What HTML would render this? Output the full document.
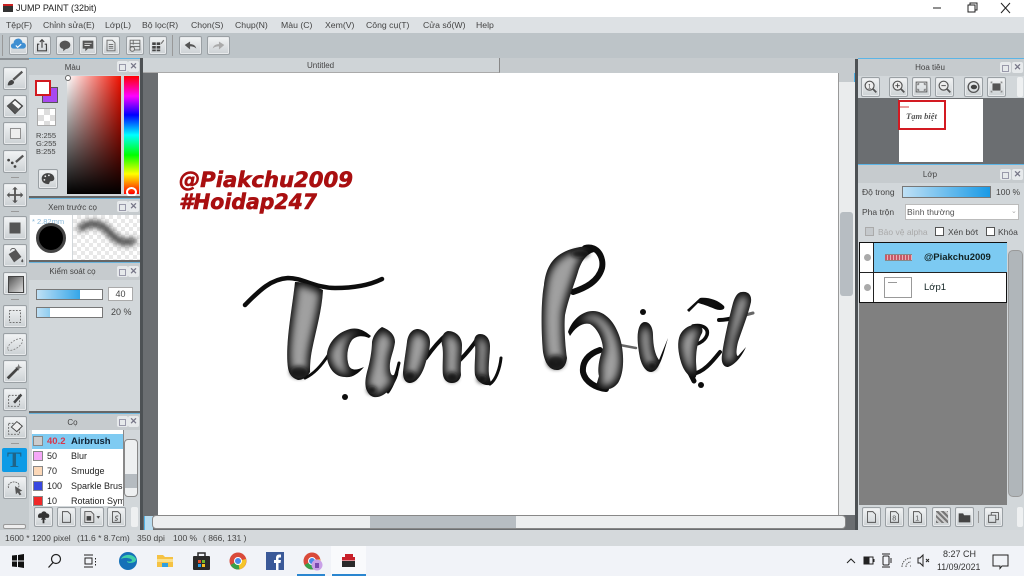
<!DOCTYPE html>
<html><head><meta charset="utf-8">
<style>
html,body{margin:0;padding:0;width:1024px;height:576px;overflow:hidden;background:#d5d9dc}
body{font-family:"Liberation Sans","Noto Sans CJK SC",sans-serif;font-size:9px;color:#333;position:relative}
.a{position:absolute}
.t{position:absolute;white-space:nowrap;line-height:1}
.b{position:absolute;box-sizing:border-box;border:1px solid #9aa0a4;border-radius:2px;background:linear-gradient(#f2f4f5,#ccd1d4);box-shadow:inset 0 0 0 1px #e8eaec}
.b svg{position:absolute;left:0;top:0;width:100%;height:100%}
.h{position:absolute;background:#c6cbce;text-align:center;color:#444;font-size:8px}
.x{position:absolute;width:11px;height:11px;background:#e6e9eb;border-radius:2px;color:#778;font-size:9px;line-height:11px;text-align:center;font-weight:bold}
.p::after{content:"";position:absolute;left:2px;top:3px;width:5px;height:5px;border:1px solid #99a}
.m{position:absolute;top:21px;font-size:8.700px;color:#444;white-space:nowrap;line-height:1}
.s{position:absolute;top:534px;font-size:8.500px;color:#444;white-space:nowrap;line-height:1}
</style></head><body>

<!-- title bar -->
<div class="a" style="left:0;top:0;width:1024px;height:17px;background:#fff"></div>
<div class="a" style="left:3px;top:4px;width:10px;height:8px;background:#333;border-top:2px solid #c22;box-sizing:border-box"></div>
<div class="t" style="left:16px;top:4px;font-size:9px;color:#222">JUMP PAINT (32bit)</div>
<svg class="a" style="left:930px;top:0" width="94" height="17" fill="none" stroke="#222" stroke-width="1"><path d="M3 8h8"/><path d="M38 5h7v7h-7zM40 5V3h7v7h-2"/><path d="M71 3l9 10M80 3l-9 10"/></svg>

<!-- menu -->
<div class="a" style="left:0;top:17px;width:1024px;height:16px;background:#dde1e4"></div>
<div class="m" style="left:6px">Tệp(F)</div>
<div class="m" style="left:43px">Chỉnh sửa(E)</div>
<div class="m" style="left:105px">Lớp(L)</div>
<div class="m" style="left:142px">Bộ lọc(R)</div>
<div class="m" style="left:191px">Chọn(S)</div>
<div class="m" style="left:235px">Chụp(N)</div>
<div class="m" style="left:281px">Màu (C)</div>
<div class="m" style="left:325px">Xem(V)</div>
<div class="m" style="left:366px">Công cụ(T)</div>
<div class="m" style="left:423px">Cửa sổ(W)</div>
<div class="m" style="left:476px">Help</div>

<!-- toolbar -->
<div class="a" style="left:0;top:33px;width:1024px;height:26px;background:#bdc4c8"></div>
<div class="a" style="left:2px;top:35px;width:1px;height:21px;background:#999"></div>
<div class="a" style="left:172px;top:35px;width:1px;height:21px;background:#999"></div>
<div class="b" style="left:9px;top:36px;width:19px;height:19px"><svg viewBox="0 0 19 19"><path d="M4 13a3 3 0 0 1 0-6 5 5 0 0 1 10-0.5 3 3 0 0 1 1 6.500z" fill="#3f8fd2"/><path d="M6.500 9.500l2 2 4-3.500" fill="none" stroke="#fff" stroke-width="1.300"/></svg></div>
<div class="b" style="left:33px;top:36px;width:18px;height:19px"><svg viewBox="0 0 18 19" fill="none" stroke="#444" stroke-width="1.300"><path d="M6 8H4v7.500h10V8h-2M9 12V3M6.500 5.500L9 3l2.500 2.500"/></svg></div>
<div class="b" style="left:56px;top:36px;width:18px;height:19px"><svg viewBox="0 0 18 19"><path d="M3 9c0-3 3-5 6-5s6 2 6 5-3 4.500-5 4.500L7 16v-2.700C5 13 3 12 3 9z" fill="#555"/></svg></div>
<div class="b" style="left:79px;top:36px;width:18px;height:19px"><svg viewBox="0 0 18 19"><path d="M3 4h12v9H9l-3 3v-3H3z" fill="#555"/><path d="M5 7h8M5 9.500h6" stroke="#ddd"/></svg></div>
<div class="b" style="left:102px;top:36px;width:18px;height:19px"><svg viewBox="0 0 18 19" fill="none" stroke="#666"><path d="M4.500 3.500h6l3 3v9h-9zM6.500 8.500h5M6.500 10.500h5M6.500 12.500h5"/></svg></div>
<div class="b" style="left:126px;top:36px;width:18px;height:19px"><svg viewBox="0 0 18 19" fill="none" stroke="#666"><path d="M3.500 3.500h11v11h-11zM3.500 7h11M3.500 10.500h11M7 3.500v5"/><circle cx="6" cy="13.500" r="2.500" fill="#ddd"/></svg></div>
<div class="b" style="left:149px;top:36px;width:18px;height:19px"><svg viewBox="0 0 18 19" fill="#444"><path d="M2.500 6h4v3h-4zM7.500 6h4v3h-4zM2.500 10h4v3h-4zM7.500 10h4v3h-4zM2.500 14h4v2h-4zM7.500 14h4v2h-4z"/><path d="M12 7l3-4 1 1-3 4z" fill="#777"/></svg></div>
<div class="b" style="left:179px;top:36px;width:23px;height:19px"><svg viewBox="0 0 23 19"><path d="M5 9l6-4v3c3 0 6 1 7 5-2-2-4-2.500-7-2.500V14z" fill="#555"/></svg></div>
<div class="b" style="left:207px;top:36px;width:23px;height:19px"><svg viewBox="0 0 23 19"><path d="M18 9l-6-4v3c-3 0-6 1-7 5 2-2 4-2.500 7-2.500V14z" fill="#aaa"/></svg></div>

<!-- canvas area -->
<div class="a" style="left:141px;top:59px;width:716px;height:471px;background:#6b6e71"></div>
<div class="a" style="left:143px;top:58px;width:357px;height:15px;background:#cfd4d7;border-right:1px solid #888;border-bottom:1px solid #aaa;box-sizing:border-box"></div>
<div class="a" style="left:500px;top:58px;width:355px;height:15px;background:#c6cbce"></div>
<div class="t" style="left:307px;top:62px;font-size:8px;color:#444">Untitled</div>
<div class="a" style="left:158px;top:73px;width:680px;height:442px;background:#fff"></div>
<!-- v scrollbar -->
<div class="a" style="left:838px;top:73px;width:17px;height:442px;background:#eaeced;border-left:1px solid #999;box-sizing:border-box"></div>
<div class="a" style="left:839px;top:73px;width:16px;height:9px;background:#c6cbce;border-right:1px solid #4fb3e8;box-sizing:border-box"></div>
<div class="a" style="left:840px;top:212px;width:13px;height:84px;background:#b7bdc2;border-radius:3px"></div>
<!-- h scrollbar -->
<div class="a" style="left:143px;top:515px;width:712px;height:15px;background:#6b6e71"></div>
<div class="a" style="left:144px;top:516px;width:9px;height:14px;background:#b9dcef;border-left:1px solid #4fb3e8;box-sizing:border-box"></div>
<div class="a" style="left:152px;top:515px;width:694px;height:14px;background:#eceeef;border:1px solid #888;border-radius:4px;box-sizing:border-box"></div>
<div class="a" style="left:370px;top:516px;width:146px;height:12px;background:#b7bdc2"></div>

<!-- canvas art -->
<svg class="a" style="left:0;top:0" width="1024" height="576" fill="none" stroke-linecap="round" stroke-linejoin="round">
<defs>
<filter id="inn" x="-20%" y="-20%" width="140%" height="140%" color-interpolation-filters="sRGB">
<feMorphology in="SourceAlpha" operator="erode" radius="3.200"/>
<feGaussianBlur stdDeviation="3.600" result="a"/>
<feFlood flood-color="#a0a0a0"/>
<feComposite in2="a" operator="in"/>
<feComposite in2="SourceAlpha" operator="in" result="g"/>
<feMerge><feMergeNode in="SourceGraphic"/><feMergeNode in="g"/></feMerge>
</filter>
<filter id="dk" x="-50%" y="-50%" width="200%" height="200%"><feGaussianBlur stdDeviation="2"/></filter>
</defs>
<text x="179" y="187" font-family="DejaVu Sans" font-weight="bold" font-style="italic" font-size="21" fill="#a90f10" stroke="#a90f10" stroke-width=".6" textLength="174" lengthAdjust="spacingAndGlyphs">@Piakchu2009</text>
<text x="179" y="209" font-family="DejaVu Sans" font-weight="bold" font-style="italic" font-size="21" fill="#a90f10" stroke="#a90f10" stroke-width=".6" textLength="138" lengthAdjust="spacingAndGlyphs">#Hoidap247</text>
<!-- thin black strokes -->
<g stroke="#0d0d0d">
<path d="M245 305C258 292 270 279 288 278C303 278 315 288 335 288C352 288 368 286 382 279" stroke-width="4.500"/>
<path d="M305 378C314 374 322 365 329 354" stroke-width="3"/>
<path d="M426 358C433 348 440 340 447 334" stroke-width="4"/>
<path d="M460 360C468 352 474 344 478 338" stroke-width="4"/>
<path d="M490 384C496 380 500 368 501 358" stroke-width="3"/>
<path d="M388 392C393 385 397 372 399 363" stroke-width="3"/>
<path d="M585 248C598 245 604 258 602 268C598 282 585 288 573 292" stroke-width="6"/>
<path d="M600 350C588 354 582 362 583 372C585 382 596 388 606 389" stroke-width="6"/>
<path d="M693 326C702 324 709 328 707 335C704 343 695 345 688 347" stroke-width="3.500"/>
<path d="M692 374C703 373 712 362 720 352" stroke-width="4"/>
<path d="M690 373L694 381" stroke-width="5"/>
<path d="M719 320C726 320 730 319 736 317" stroke-width="4"/>
<path d="M620 345L636 348" stroke="#666" stroke-width="2.500"/>
<path d="M738 317L753 313" stroke="#666" stroke-width="3"/>
</g>
<g fill="#0d0d0d" stroke="none"><circle cx="345" cy="397" r="3"/><circle cx="643" cy="312" r="3"/><circle cx="701" cy="385" r="3"/></g>
<!-- thick strokes -->
<g fill="#0c0c0c" filter="url(#inn)">
<path d="M295 282C305 282 315 286 323 290C322 310 316 330 312 350C310 360 310 368 310 372C306 378 302 380 298 380C292 378 289 374 288 368C286 355 288 335 290 320C292 305 294 292 295 282Z"/>
<path d="M347 330C354 327 362 328 371 336L369 338C362 335 356 336 352 340C347 347 346 358 349 366C352 371 357 370 364 367C358 374 352 378 345 377C336 377 329 370 327 358C326 346 335 334 347 330Z"/>
<path d="M382 327C390 330 395 335 395 342C394 350 391 356 390 363C389 372 392 380 396 372L400 362L398 375C395 385 388 392 383 395C378 398 372 398 369 394C364 388 365 380 367 372C370 362 372 350 372 342C373 336 377 330 382 327Z"/>
<path d="M418 329C425 330 430 335 430 342C430 350 427 358 425 365C422 375 416 383 410 383C405 383 403 378 403 372C404 362 406 350 407 342C408 334 412 329 418 329Z"/>
<path d="M448 331C456 331 462 337 462 345C462 355 460 365 461 375C460 381 456 383 452 383C447 383 444 380 443 375C442 365 444 352 442 345C441 338 443 332 448 331Z"/>
<path d="M480 334C487 334 490 340 490 346C490 355 488 365 489 375C490 380 492 384 490 385C484 386 477 382 475 375C474 365 476 352 475 345C473 340 475 334 480 334Z"/>
<path d="M580 247C586 246 592 248 594 252C586 254 581 262 578 272C574 285 568 300 565 315C564 325 565 345 567 358C566 366 562 370 557 370C550 370 545 364 543 352C541 330 541 300 544 285C546 268 552 252 580 247Z"/>
<path d="M568 332C572 320 582 311 593 311C605 311 615 322 620 338C624 352 625 372 618 383C612 391 602 391 596 386L599 376C597 368 600 356 603 348C602 338 597 328 590 324C582 322 575 328 570 336Z"/>
<path d="M645 322C650 322 653 328 653 335C653 345 655 355 659 360L668 338L664 352C661 362 657 372 651 372C646 372 642 366 640 358C638 348 637 338 638 332C639 326 641 322 645 322Z"/>
<path d="M693 325C700 324 704 328 702 333C698 340 696 350 696 360C696 368 698 375 695 378C690 378 684 372 681 362C678 352 677 342 680 335C683 329 688 326 693 325Z"/>
<path d="M687 310L700 298C708 297 718 300 724 306C726 310 720 311 715 309C708 306 702 304 698 303L689 312Z"/>
<path d="M742 292C748 291 752 295 751 302C748 315 742 330 738 342C736 350 736 356 738 356L746 347C742 356 735 365 728 367C723 367 721 362 722 355C724 340 729 318 733 303C735 296 738 292 742 292Z"/>
</g>
<!-- darker stem ends -->
<g fill="#111" stroke="none" filter="url(#dk)" opacity=".85">
<ellipse cx="299" cy="372" rx="9" ry="6"/>
<ellipse cx="410" cy="376" rx="6" ry="5"/>
<ellipse cx="452" cy="377" rx="6" ry="5"/>
<ellipse cx="482" cy="379" rx="5" ry="4"/>
<ellipse cx="556" cy="362" rx="9" ry="7"/>
<ellipse cx="372" cy="390" rx="5" ry="4"/>
<ellipse cx="580" cy="254" rx="9" ry="4"/>
<ellipse cx="652" cy="366" rx="5" ry="4"/>
</g>
</svg>

<!-- LEFT toolbar -->
<div class="a" style="left:0;top:59px;width:29px;height:471px;background:#c5cbce"></div>
<div class="a" style="left:0;top:58px;width:29px;height:2px;background:#8b9094"></div>
<div class="b" style="left:3px;top:67px;width:24px;height:23px"><svg viewBox="0 0 24 23"><path d="M20 4L10 13" stroke="#555" stroke-width="2.500"/><path d="M4 19c0-3 2-6 5-6l2 2c0 3-3 4-7 4z" fill="#444"/></svg></div>
<div class="b" style="left:3px;top:95px;width:24px;height:23px"><svg viewBox="0 0 24 23"><path d="M12 4l8 7-8 8-8-8z" fill="#f5f5f5" stroke="#444" stroke-width="1.500"/><path d="M4 11l4-4 9 8-4 4z" fill="#555"/></svg></div>
<div class="b" style="left:3px;top:122px;width:24px;height:23px"><svg viewBox="0 0 24 23"><rect x="7" y="6" width="11" height="11" fill="#eee" stroke="#888"/></svg></div>
<div class="b" style="left:3px;top:150px;width:24px;height:23px"><svg viewBox="0 0 24 23"><path d="M21 5L13 12" stroke="#555" stroke-width="2.500"/><circle cx="5" cy="10" r="1.500" fill="#444"/><circle cx="9" cy="13" r="1.500" fill="#444"/><circle cx="12" cy="17" r="1.500" fill="#444"/></svg></div>
<div class="a" style="left:11px;top:177px;width:8px;height:1px;background:#999"></div>
<div class="b" style="left:3px;top:183px;width:24px;height:24px"><svg viewBox="0 0 24 24" fill="#555"><path d="M12 3l3 3h-2v5h5V9l3 3-3 3v-2h-5v5h2l-3 3-3-3h2v-5H6v2l-3-3 3-3v2h5V6H9z"/></svg></div>
<div class="a" style="left:11px;top:211px;width:8px;height:1px;background:#999"></div>
<div class="b" style="left:3px;top:216px;width:24px;height:24px"><svg viewBox="0 0 24 24"><rect x="6" y="6" width="12" height="12" fill="#555"/></svg></div>
<div class="b" style="left:3px;top:244px;width:24px;height:23px"><svg viewBox="0 0 24 23"><path d="M5 10l8-5 6 8-8 6z" fill="#555"/><path d="M7 6c1-3 5-3 6 0" fill="none" stroke="#555"/><path d="M20 15c1 2 2 3 0 4-2-1-1-2 0-4z" fill="#555"/></svg></div>
<div class="b" style="left:3px;top:272px;width:24px;height:23px"><div class="a" style="left:4px;top:3px;width:14px;height:15px;background:linear-gradient(135deg,#555,#ddd);border:1px solid #444"></div></div>
<div class="a" style="left:11px;top:299px;width:8px;height:1px;background:#999"></div>
<div class="b" style="left:3px;top:305px;width:24px;height:23px"><svg viewBox="0 0 24 23"><rect x="6" y="5" width="12" height="13" fill="none" stroke="#666" stroke-dasharray="2 1.500"/></svg></div>
<div class="b" style="left:3px;top:333px;width:24px;height:23px"><svg viewBox="0 0 24 23"><path d="M4 16c0-5 9-11 14-11 3 0 3 4 0 7-3 4-14 9-14 4z" fill="none" stroke="#888" stroke-dasharray="2 1.500"/></svg></div>
<div class="b" style="left:3px;top:360px;width:24px;height:23px"><svg viewBox="0 0 24 23"><path d="M4 19L15 8" stroke="#444" stroke-width="3"/><path d="M16 3l1 3 3 1-3 1-1 3-1-3-3-1 3-1z" fill="#777"/></svg></div>
<div class="b" style="left:3px;top:388px;width:24px;height:23px"><svg viewBox="0 0 24 23"><rect x="5" y="7" width="12" height="12" fill="none" stroke="#666" stroke-dasharray="2 1.500"/><path d="M10 14l8-9 2 2-8 9z" fill="#444"/></svg></div>
<div class="b" style="left:3px;top:416px;width:24px;height:23px"><svg viewBox="0 0 24 23"><rect x="5" y="7" width="12" height="12" fill="none" stroke="#666" stroke-dasharray="2 1.500"/><path d="M8 11l6-6 6 5-6 6z" fill="#eee" stroke="#444"/></svg></div>
<div class="a" style="left:11px;top:443px;width:8px;height:1px;background:#999"></div>
<div class="a" style="left:2px;top:448px;width:25px;height:24px;background:#0d9be6;border-radius:2px"></div>
<div class="t" style="left:7px;top:449px;font-size:22px;font-weight:bold;font-family:'Liberation Serif',serif;color:#1f6488">T</div>
<div class="b" style="left:3px;top:476px;width:24px;height:23px"><svg viewBox="0 0 24 23" fill="none"><path d="M5 12c-2-5 5-8 9-6 3 1 3 5 1 6" stroke="#666" stroke-dasharray="2 1"/><path d="M12 10l8 5-3 1 2 3-2 1-2-3-2 2z" fill="#555"/></svg></div>
<div class="a" style="left:3px;top:524px;width:23px;height:5px;background:#eee;border:1px solid #999;border-radius:2px;box-sizing:border-box"></div>

<!-- LEFT panels -->
<div class="a" style="left:29px;top:59px;width:112px;height:471px;background:#d2d7da"></div>
<div class="a" style="left:29px;top:58px;width:112px;height:1px;background:#5cb5e6"></div>
<div class="a" style="left:140px;top:58px;width:3px;height:472px;background:#4d5154"></div>
<div class="h" style="left:29px;top:59px;width:111px;height:16px;line-height:17px;padding-right:24px;box-sizing:border-box">Màu</div>
<div class="x p" style="left:117px;top:61px"></div><div class="x" style="left:128px;top:61px">✕</div>
<div class="a" style="left:42px;top:87px;width:16px;height:16px;background:#a848f0;border:1px solid #555;box-sizing:border-box"></div>
<div class="a" style="left:35px;top:80px;width:16px;height:16px;background:#fff;border:2px solid #d21a20;box-sizing:border-box"></div>
<div class="a" style="left:37px;top:108px;width:19px;height:18px;background:conic-gradient(#ddd 25%,#fff 0 50%,#ddd 0 75%,#fff 0) 0 0/12px 12px;border:1px solid #aaa;box-sizing:border-box"></div>
<div class="t" style="left:36px;top:132px;font-size:7.500px;color:#444">R:255</div>
<div class="t" style="left:36px;top:140px;font-size:7.500px;color:#444">G:255</div>
<div class="t" style="left:36px;top:148px;font-size:7.500px;color:#444">B:255</div>
<div class="b" style="left:38px;top:169px;width:20px;height:20px"><svg viewBox="0 0 20 20"><path d="M10 3.500c4 0 7 2.500 7 6 0 3-3 3-4 3-1.500 0-1 2-2 3-1 .5-8 0-8-6 0-3.500 3-6 7-6z" fill="#444"/><circle cx="7" cy="7" r="1" fill="#eee"/><circle cx="11" cy="6" r="1" fill="#eee"/><circle cx="6" cy="11" r="1" fill="#eee"/></svg></div>
<div class="a" style="left:67px;top:76px;width:54px;height:118px;background:linear-gradient(to top,#000,rgba(0,0,0,0)),linear-gradient(to right,#fff,#f01000)"></div>
<div class="a" style="left:65px;top:75px;width:6px;height:6px;border:1px solid #666;border-radius:50%;background:#fff;box-sizing:border-box"></div>
<div class="a" style="left:124px;top:76px;width:15px;height:118px;background:linear-gradient(#f00,#f0f 17%,#00f 33%,#0ff 50%,#0f0 67%,#ff0 83%,#f00)"></div>
<div class="a" style="left:126px;top:187px;width:11px;height:10px;border:2px solid #fff;border-radius:50%;box-sizing:border-box"></div>
<div class="a" style="left:29px;top:196px;width:111px;height:3px;background:linear-gradient(#666 60%,#6ab4dc 60%)"></div>

<div class="h" style="left:29px;top:199px;width:111px;height:16px;line-height:17px;padding-right:24px;box-sizing:border-box">Xem trước cọ</div>
<div class="x p" style="left:117px;top:201px"></div><div class="x" style="left:128px;top:201px">✕</div>
<div class="a" style="left:30px;top:215px;width:42px;height:45px;background:#fff"></div>
<div class="t" style="left:32px;top:218px;font-size:7.500px;color:#8ab8d8">* 2.82mm</div>
<div class="a" style="left:36px;top:223px;width:30px;height:30px;border-radius:50%;background:#000;border:3px solid #444;box-sizing:border-box"></div>
<div class="a" style="left:73px;top:215px;width:67px;height:45px;background:conic-gradient(#e8e8e8 25%,#fff 0 50%,#e8e8e8 0 75%,#fff 0) 0 0/8px 8px"></div>
<svg class="a" style="left:73px;top:215px" width="67" height="45" fill="none"><defs><filter id="b2" x="-20%" y="-50%" width="140%" height="200%"><feGaussianBlur stdDeviation="3"/></filter></defs><path d="M8 13C18 6 28 8 36 17C42 24 50 30 60 26" stroke="#444" stroke-width="7" stroke-linecap="round" filter="url(#b2)"/></svg>
<div class="a" style="left:29px;top:260px;width:111px;height:3px;background:linear-gradient(#666 60%,#6ab4dc 60%)"></div>

<div class="h" style="left:29px;top:263px;width:111px;height:17px;line-height:18px;padding-right:24px;box-sizing:border-box">Kiểm soát cọ</div>
<div class="x p" style="left:117px;top:266px"></div><div class="x" style="left:128px;top:266px">✕</div>
<div class="a" style="left:36px;top:289px;width:67px;height:11px;border:1px solid #777;box-sizing:border-box;background:linear-gradient(to right,#bfe0f5 0,#35a6e8 66%,#fff 66%)"></div>
<div class="a" style="left:108px;top:287px;width:25px;height:14px;border:1px solid #aaa;background:#fff;box-sizing:border-box;text-align:center;line-height:12px;font-size:9px;color:#444">40</div>
<div class="a" style="left:36px;top:307px;width:67px;height:11px;border:1px solid #777;box-sizing:border-box;background:linear-gradient(to right,#bfe0f5 0,#8fcdf0 20%,#fff 20%)"></div>
<div class="t" style="left:111px;top:308px;font-size:9px;color:#444">20 %</div>
<div class="a" style="left:29px;top:411px;width:111px;height:3px;background:linear-gradient(#666 60%,#6ab4dc 60%)"></div>

<div class="h" style="left:29px;top:414px;width:111px;height:16px;line-height:17px;padding-right:24px;box-sizing:border-box">Cọ</div>
<div class="x p" style="left:117px;top:416px"></div><div class="x" style="left:128px;top:416px">✕</div>
<div class="a" style="left:32px;top:430px;width:92px;height:76px;background:#fff;overflow:hidden;border-right:1px solid #888;box-sizing:border-box">
 <div class="a" style="left:0;top:4px;width:92px;height:15px;background:#7fcbf2"></div>
 <div class="a" style="left:1px;top:6px;width:10px;height:10px;background:#ccc;border:1px solid #888;box-sizing:border-box"></div>
 <div class="t" style="left:15px;top:7px;font-size:9.500px;font-weight:bold;color:#d8394d">40.2</div>
 <div class="t" style="left:39px;top:7px;font-size:9.500px;font-weight:bold;color:#123">Airbrush</div>
 <div class="a" style="left:1px;top:21px;width:10px;height:10px;background:#f5a8f8;border:1px solid #888;box-sizing:border-box"></div>
 <div class="t" style="left:15px;top:22px;font-size:9px;color:#222">50</div><div class="t" style="left:39px;top:22px;font-size:9px;color:#222">Blur</div>
 <div class="a" style="left:1px;top:36px;width:10px;height:10px;background:#fcd8b8;border:1px solid #888;box-sizing:border-box"></div>
 <div class="t" style="left:15px;top:37px;font-size:9px;color:#222">70</div><div class="t" style="left:39px;top:37px;font-size:9px;color:#222">Smudge</div>
 <div class="a" style="left:1px;top:51px;width:10px;height:10px;background:#3848e0;border:1px solid #888;box-sizing:border-box"></div>
 <div class="t" style="left:15px;top:52px;font-size:9px;color:#222">100</div><div class="t" style="left:39px;top:52px;font-size:9px;color:#222">Sparkle Brush</div>
 <div class="a" style="left:1px;top:66px;width:10px;height:10px;background:#f02828;border:1px solid #888;box-sizing:border-box"></div>
 <div class="t" style="left:15px;top:67px;font-size:9px;color:#222">10</div><div class="t" style="left:39px;top:67px;font-size:9px;color:#222">Rotation Sym</div>
</div>
<div class="a" style="left:124px;top:439px;width:14px;height:58px;background:#eef0f1;border:1px solid #888;border-radius:4px;box-sizing:border-box"></div>
<div class="a" style="left:125px;top:474px;width:12px;height:14px;background:#b5bbc0"></div>
<div class="b" style="left:34px;top:507px;width:19px;height:20px"><svg viewBox="0 0 19 20"><path d="M4 11c-2-3 1-6 3-5 1-3 5-3 6 0 3 0 4 3 2 5z" fill="#333"/><path d="M9.500 9l3 4h-2v4h-2v-4h-2z" fill="#333"/></svg></div>
<div class="b" style="left:57px;top:507px;width:19px;height:20px"><svg viewBox="0 0 19 20" fill="none" stroke="#555"><path d="M5 4h6l3 3v9H5z"/></svg></div>
<div class="b" style="left:80px;top:507px;width:24px;height:20px"><svg viewBox="0 0 24 20"><path d="M4 4h7l3 3v9H4z" fill="#ddd" stroke="#555"/><rect x="6" y="9" width="5" height="5" fill="#444"/><path d="M17 9h4l-2 3z" fill="#444"/></svg></div>
<div class="b" style="left:107px;top:507px;width:19px;height:20px"><svg viewBox="0 0 19 20" fill="none" stroke="#555"><path d="M5 4h6l3 3v9H5z"/><path d="M11.500 9c-3-1-4 2-2 2.500s1 3-2 2"/></svg></div>
<div class="a" style="left:131px;top:507px;width:7px;height:20px;background:#eef0f1;border-radius:2px"></div>

<!-- RIGHT panels -->
<div class="a" style="left:855px;top:59px;width:3px;height:471px;background:#4d5154"></div>
<div class="a" style="left:858px;top:59px;width:166px;height:471px;background:#d2d7da"></div>
<div class="a" style="left:858px;top:58px;width:166px;height:1px;background:#5cb5e6"></div>
<div class="h" style="left:858px;top:59px;width:166px;height:17px;line-height:18px;padding-right:22px;box-sizing:border-box">Hoa tiêu</div>
<div class="x p" style="left:1000px;top:62px"></div><div class="x" style="left:1012px;top:62px">✕</div>
<svg width="0" height="0" style="position:absolute"><defs><symbol id="mg" viewBox="0 0 19 20"><circle cx="8.500" cy="8.500" r="5" fill="#eee" stroke="#555" stroke-width="1.300"/><path d="M12 12l4 4" stroke="#555" stroke-width="2"/></symbol></defs></svg>
<div class="b" style="left:861px;top:77px;width:19px;height:20px"><svg viewBox="0 0 19 20"><use href="#mg"/><text x="6.500" y="11.500" font-size="7" fill="#444" font-family="Liberation Sans">1</text></svg></div>
<div class="b" style="left:889px;top:77px;width:19px;height:20px"><svg viewBox="0 0 19 20"><use href="#mg"/><path d="M6 8.500h5M8.500 6v5" stroke="#444"/></svg></div>
<div class="b" style="left:912px;top:77px;width:19px;height:20px"><svg viewBox="0 0 19 20" fill="none" stroke="#555"><rect x="3.500" y="4.500" width="12" height="11"/><path d="M5.500 8V6.500H7M12 6.500h1.500V8M13.500 12v1.500H12M7 13.500H5.500V12"/></svg></div>
<div class="b" style="left:935px;top:77px;width:19px;height:20px"><svg viewBox="0 0 19 20"><use href="#mg"/><path d="M6 8.500h5" stroke="#444"/></svg></div>
<div class="b" style="left:964px;top:77px;width:19px;height:20px"><svg viewBox="0 0 19 20"><circle cx="9.500" cy="10" r="6" fill="none" stroke="#555" stroke-width="1.500"/><ellipse cx="10" cy="10" rx="3.500" ry="2.500" fill="#444"/></svg></div>
<div class="b" style="left:987px;top:77px;width:19px;height:20px"><svg viewBox="0 0 19 20"><rect x="5" y="6" width="9" height="8" fill="#555"/><path d="M3.500 6V4.500H5M14 4.500h1.500V6M15.500 14v1.500H14M5 15.500H3.500V14" fill="none" stroke="#777"/></svg></div>
<div class="a" style="left:1017px;top:77px;width:6px;height:20px;background:#eef0f1;border-radius:2px"></div>
<div class="a" style="left:858px;top:98px;width:166px;height:66px;background:#6b6e71"></div>
<div class="a" style="left:899px;top:99px;width:84px;height:63px;background:#fff"></div>
<div class="a" style="left:898px;top:100px;width:48px;height:30px;border:2px solid #d31a22;box-sizing:border-box"></div>
<div class="a" style="left:900px;top:106px;width:9px;height:2px;background:#eaa0a0"></div>
<div class="t" style="left:906px;top:112px;font-size:8.500px;font-style:italic;font-weight:bold;font-family:'Liberation Serif',serif;color:#555">Tạm biệt</div>
<div class="a" style="left:858px;top:164px;width:166px;height:1px;background:#5cb5e6"></div>
<div class="h" style="left:858px;top:165px;width:166px;height:18px;line-height:19px;padding-right:22px;box-sizing:border-box">Lớp</div>
<div class="x p" style="left:1000px;top:169px"></div><div class="x" style="left:1012px;top:169px">✕</div>
<div class="t" style="left:862px;top:188px;font-size:8.500px;color:#444">Độ trong</div>
<div class="a" style="left:902px;top:186px;width:89px;height:12px;border:1px solid #777;box-sizing:border-box;background:linear-gradient(to right,#bfe0f5,#199ae6)"></div>
<div class="t" style="left:996px;top:188px;font-size:8.500px;color:#444">100 %</div>
<div class="t" style="left:862px;top:208px;font-size:8.500px;color:#444">Pha trộn</div>
<div class="a" style="left:905px;top:204px;width:114px;height:16px;background:#fff;border:1px solid #bbb;box-sizing:border-box"></div>
<div class="t" style="left:907px;top:208px;font-size:8.500px;color:#555">Bình thường</div>
<div class="t" style="left:1011px;top:208px;font-size:7px;color:#aaa">⌄</div>
<div class="a" style="left:865px;top:227px;width:9px;height:9px;background:#c5c9cc;border:1px solid #aaa;box-sizing:border-box"></div>
<div class="t" style="left:878px;top:228px;font-size:8.500px;color:#aaa">Bảo vệ alpha</div>
<div class="a" style="left:935px;top:227px;width:9px;height:9px;background:#fff;border:1px solid #555;box-sizing:border-box"></div>
<div class="t" style="left:948px;top:228px;font-size:8.500px;color:#444">Xén bớt</div>
<div class="a" style="left:986px;top:227px;width:9px;height:9px;background:#fff;border:1px solid #555;box-sizing:border-box"></div>
<div class="t" style="left:998px;top:228px;font-size:8.500px;color:#444">Khóa</div>
<div class="a" style="left:859px;top:243px;width:148px;height:262px;background:#808080"></div>
<div class="a" style="left:859px;top:242px;width:148px;height:61px;background:#fff;border:1px solid #111;box-sizing:border-box"></div>
<div class="a" style="left:873px;top:243px;width:134px;height:29px;background:#7ccaf2"></div>
<div class="a" style="left:860px;top:272px;width:147px;height:1px;background:#222"></div>
<div class="a" style="left:873px;top:243px;width:1px;height:59px;background:#222"></div>
<div class="a" style="left:864px;top:254px;width:7px;height:7px;border-radius:50%;background:#aaa"></div>
<div class="a" style="left:864px;top:284px;width:7px;height:7px;border-radius:50%;background:#aaa"></div>
<div class="a" style="left:885px;top:254px;width:27px;height:7px;background:repeating-linear-gradient(90deg,#c85a68 0 2px,#e8b0b8 2px 3px);border-top:1px solid #888;border-bottom:1px solid #888;box-sizing:border-box"></div>
<div class="t" style="left:924px;top:253px;font-size:9.500px;font-weight:bold;color:#122">@Piakchu2009</div>
<div class="a" style="left:884px;top:277px;width:28px;height:21px;background:#fff;border:1px solid #999;box-sizing:border-box"></div>
<div class="a" style="left:888px;top:282px;width:9px;height:1px;background:#999"></div>
<div class="t" style="left:924px;top:283px;font-size:9.500px;color:#122">Lớp1</div>
<div class="a" style="left:1008px;top:250px;width:15px;height:247px;background:#b0b6ba;border:1px solid #999;border-radius:5px;box-sizing:border-box"></div>
<div class="b" style="left:862px;top:507px;width:19px;height:20px"><svg viewBox="0 0 19 20" fill="none" stroke="#555"><path d="M5 4h6l3 3v9H5z"/></svg></div>
<div class="b" style="left:885px;top:507px;width:19px;height:20px"><svg viewBox="0 0 19 20" fill="none" stroke="#555"><path d="M5 4h6l3 3v9H5z"/><text x="7" y="14" font-size="8" fill="#555" stroke="none" font-family="Liberation Sans">8</text></svg></div>
<div class="b" style="left:908px;top:507px;width:19px;height:20px"><svg viewBox="0 0 19 20" fill="none" stroke="#555"><path d="M5 4h6l3 3v9H5z"/><text x="7" y="14" font-size="8" fill="#555" stroke="none" font-family="Liberation Sans">1</text></svg></div>
<div class="b" style="left:932px;top:507px;width:19px;height:20px"><div class="a" style="left:3px;top:3px;width:12px;height:12px;background:repeating-linear-gradient(45deg,#777 0 2px,#ccc 2px 4px)"></div></div>
<div class="b" style="left:955px;top:507px;width:19px;height:20px"><svg viewBox="0 0 19 20"><path d="M3 6h5l1 2h7v8H3z" fill="#444"/></svg></div>
<div class="a" style="left:978px;top:511px;width:1px;height:12px;background:#999"></div>
<div class="b" style="left:984px;top:507px;width:19px;height:20px"><svg viewBox="0 0 19 20" fill="none" stroke="#555"><path d="M4 8h8v8H4zM7 8V5h8v8h-3"/></svg></div>
<div class="a" style="left:1017px;top:507px;width:6px;height:20px;background:#eef0f1;border-radius:2px"></div>

<!-- status -->
<div class="a" style="left:0;top:530px;width:1024px;height:16px;background:#d5d9dc"></div>
<div class="s" style="left:5px">1600 * 1200 pixel</div>
<div class="s" style="left:77px">(11.6 * 8.7cm)</div>
<div class="s" style="left:137px">350 dpi</div>
<div class="s" style="left:173px">100 %</div>
<div class="s" style="left:203px">( 866, 131 )</div>

<!-- taskbar -->
<div class="a" style="left:0;top:546px;width:1024px;height:30px;background:#f1f3f8"></div>
<div class="a" style="left:331px;top:546px;width:35px;height:30px;background:#f9fafc"></div>
<div class="a" style="left:297px;top:574px;width:28px;height:2px;background:#2a86d0"></div>
<div class="a" style="left:332px;top:574px;width:34px;height:2px;background:#2a86d0"></div>
<svg class="a" style="left:0;top:546px" width="380" height="30">
<path d="M12 9.500l5-.5v5.500h-5zM18 9l6-1v6.500h-6zM12 15.500h5V21l-5-.5zM18 15.500h6V22l-6-1z" fill="#111"/>
<circle cx="56" cy="13" r="4.500" fill="none" stroke="#222" stroke-width="1.200"/><path d="M53 16.500l-4.500 5" stroke="#222" stroke-width="1.300"/>
<path d="M84 9h9M84 21h9M85 12h7v6h-7zM95.500 12v1.500M95.500 15v1.500M95.500 18v1.500" fill="none" stroke="#222"/>
<circle cx="128" cy="15" r="9" fill="#1570b8"/><path d="M121 13c2-5 12-6 15 0 .5 3-3 4-6 4-2 0-3-1-3-2 2 1 5 1 5-1-1-2-7-3-11-1z" fill="#3fd0a8"/>
<path d="M157 9h6l2 2h8v10h-16z" fill="#f5c244"/><path d="M157 13h16v3h-16z" fill="#fbe08a"/><rect x="162" y="17" width="6" height="4" fill="#2f9fe0"/>
<rect x="193" y="10" width="17" height="14" rx="1" fill="#2a2a2a"/><path d="M198 10V7h7v3" fill="none" stroke="#2a2a2a" stroke-width="1.500"/><rect x="198" y="14" width="3" height="3" fill="#e8502a"/><rect x="202" y="14" width="3" height="3" fill="#70b82a"/><rect x="198" y="18" width="3" height="3" fill="#2a9fe8"/><rect x="202" y="18" width="3" height="3" fill="#f5c020"/>
<circle cx="238" cy="15" r="8.500" fill="#d94a3a"/><path d="M238 15l-7.500 4a8.500 8.500 0 0 0 9 4.300z" fill="#38a04a"/><path d="M238 15l8-2a8.500 8.500 0 0 1-6.500 10.300z" fill="#f5c52a"/><circle cx="238" cy="15" r="3.500" fill="#4a8ae8" stroke="#fff"/>
<rect x="266" y="6" width="18" height="18" fill="#3b5998"/><path d="M276 24v-7h-2v-3h2v-2c0-2 1-3.500 3-3.500h2v3h-1.500c-.7 0-1 .4-1 1V14h2.500l-.5 3h-2v7z" fill="#fff"/>
<circle cx="312" cy="15" r="8.500" fill="#d94a3a"/><path d="M312 15l-7.500 4a8.500 8.500 0 0 0 9 4.300z" fill="#38a04a"/><path d="M312 15l8-2a8.500 8.500 0 0 1-6.500 10.300z" fill="#f5c52a"/><circle cx="312" cy="15" r="3.500" fill="#4a8ae8" stroke="#fff"/><circle cx="317" cy="19" r="5.500" fill="#c9a0e8"/><rect x="315" y="17" width="4" height="5" fill="#7a4ab0"/>
<rect x="342" y="11" width="13" height="3.500" fill="#c8202a"/><rect x="342" y="15" width="13" height="6" fill="#2a2a2a"/><rect x="345" y="8" width="8" height="3" fill="#c8202a"/>
</svg>
<svg class="a" style="left:840px;top:546px" width="184" height="30" fill="none" stroke="#222">
<path d="M7 17l4-4 4 4"/>
<rect x="24" y="11" width="9" height="7"/><rect x="25" y="12" width="4" height="5" fill="#222"/><path d="M34 13v3"/>
<rect x="43" y="10" width="6" height="9" rx="1"/><path d="M51 12v5M42 8h8M42 21h8"/>
<path d="M62 21c0-5 4-9 9-9M66 21c0-3 2-5 5-5M70 20h1" stroke="#555" stroke-dasharray="1.500 1"/>
<path d="M78 12h2l3-3v11l-3-3h-2zM86 13l3 3M89 13l-3 3"/>
<path d="M153 9h15v11h-6l-2 2.500V20h-7z"/>
</svg>
<div class="t" style="left:943px;top:550px;font-size:9px;color:#333">8:27 CH</div>
<div class="t" style="left:937px;top:563px;font-size:8.800px;color:#333">11/09/2021</div>

</body></html>
